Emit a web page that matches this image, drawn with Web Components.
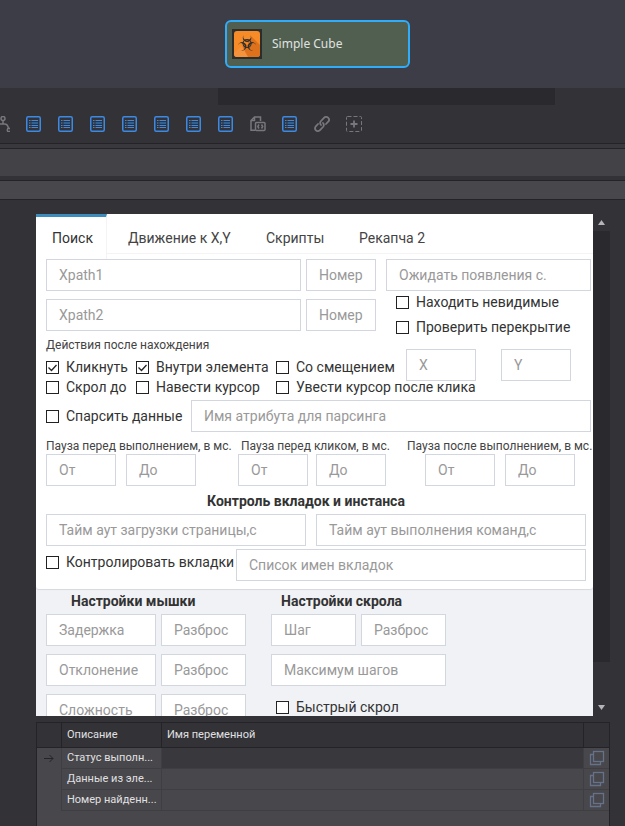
<!DOCTYPE html>
<html lang="ru">
<head>
<meta charset="utf-8">
<meta name="viewport" content="width=device-width, initial-scale=1">
<title>Simple Cube</title>
<style>
  html, body {
    height: 100%;
    margin: 0;
  }
  body {
    display: flex;
    flex-direction: column;
    overflow: hidden;
    background: #333236;
    color: #333;
    font: 14px/20px Roboto, "Noto Sans", sans-serif;
  }
</style>
</head>
<body>
  <project-canvas><cube-node>Simple Cube</cube-node></project-canvas>
  <tool-bar></tool-bar>
  <cube-settings></cube-settings>
  <variable-table></variable-table>

<script type="module">
  class ProjectCanvas extends HTMLElement {
    constructor() {
      super();
      this.attachShadow({mode: "open"});
      this.shadowRoot.innerHTML = `
      <style>
        :host {
          display: block;
          flex: none;
        }
        .area {
          display: flex;
          justify-content: center;
          padding: 20px 0 20px 10px;
          background: #3d3d47;
        }
        .track {
          height: 17px;
          margin: 0 70px 0 218px;
          background: #2a292e;
        }
      </style>
      <div class="area"><slot></slot></div>
      <div class="track"></div>
      `;
    }
  }

  class CubeNode extends HTMLElement {
    constructor() {
      super();
      this.attachShadow({mode: "open"});
      const horn = "M8.500 2.500A4.900 4.900 0 1 0 15.500 2.500A4.200 4.200 0 1 1 8.500 2.500z";
      this.shadowRoot.innerHTML = `
      <style>
        :host {
          display: flex;
          align-items: center;
          gap: 10px;
          box-sizing: border-box;
          width: 185px;
          height: 48px;
          padding-left: 5px;
          border: 2px solid #2fadfb;
          border-radius: 6px;
          background: #505f50;
          color: #e0e2e0;
          font-family: "Noto Sans", sans-serif;
          font-size: 12px;
        }
      </style>
      <svg width="30" height="30" viewBox="0 0 30 30" aria-hidden="true">
        <rect width="30" height="30" fill="#2d2e2c"/>
        <rect x="2" y="2" width="26" height="26" rx="3" fill="#f78b28"/>
        <path d="M20 8l8 8v9a3 3 0 0 1-3 3H11l-3-8z" fill="#dd711c"/>
        <path d="M2 24l8-7 6 11H5a3 3 0 0 1-3-3z" fill="#f5933c"/>
        <g transform="translate(4.500 3.500) scale(.880)" fill="#2e302e">
          <path d="${horn}"/>
          <path d="${horn}" transform="rotate(120 12 12.500)"/>
          <path d="${horn}" transform="rotate(240 12 12.500)"/>
          <circle cx="12" cy="12.500" r="4.600" fill="none" stroke="#2e302e" stroke-width="1.200"/>
          <circle cx="12" cy="12.500" r="1.300" fill="#f78b28"/>
        </g>
      </svg>
      <slot></slot>
      `;
    }
  }

  const toolIcons = {
    branch: `<g stroke="#77777d" stroke-width="1.500"><circle cx="9" cy="2.500" r="2"/><path d="M9 4.500v3.500M2 13c0-3 1-5 3.500-5h5c2.500 0 3.500 1 4 4.500"/><circle cx="15" cy="14" r="1.700"/></g>`,
    list: `<rect x=".750" y=".750" width="13.500" height="14.500" rx="1.500" stroke="#3b8ae6" stroke-width="1.500"/><path d="M3 4.500h1.500M3 7h1.500M3 9.500h1.500M3 11.500h1.500M5.500 4.500h6.500M5.500 7h6.500M5.500 9.500h6.500M5.500 11.500h6.500" stroke="#3b8ae6"/>`,
    code: `<g stroke="#77777d" stroke-width="1.500"><path d="M5 14.200H1V4.500L4.500 1h6v4M4.500 1v3.500H1"/><rect x="5.500" y="6.500" width="9.500" height="8" rx="1"/><path d="M9 8.500L7.800 10.500 9 12.500M11.500 8.500l1.200 2-1.200 2"/></g>`,
    link: `<g stroke="#77777d" stroke-width="1.800" stroke-linecap="round"><path d="M7 9a3 3 0 0 1 0-4l3-3.200a2.700 2.700 0 0 1 4.200 3.900L12 8"/><path d="M9 7a3 3 0 0 1 0 4l-3 3.200a2.700 2.700 0 0 1-4.200-3.900L4 8"/></g>`,
    add: `<rect x=".500" y=".500" width="15" height="15" rx="1" stroke="#77777d" stroke-dasharray="4 2"/><path d="M8 4.500v7M4.500 8h7" stroke="#77777d" stroke-width="1.800"/>`
  };

  class ToolBar extends HTMLElement {
    constructor() {
      super();
      this.attachShadow({mode: "open"});
      const names = ["branch", "list", "list", "list", "list", "list", "list", "list", "code", "list", "link", "add"];
      this.shadowRoot.innerHTML = `
      <style>
        :host {
          display: block;
          flex: none;
        }
        .tools {
          display: flex;
          height: 38px;
          margin-left: -14px;
        }
        button {
          display: grid;
          place-items: center;
          width: 32px;
          padding: 0;
          border: 0;
          background: none;
        }
        .line {
          height: 4px;
          border: solid #242328;
          border-width: 1px 0;
          background: #39383d;
        }
        .title {
          height: 27px;
          background: #434246;
        }
        .subtitle {
          height: 18px;
          margin: 4px 0 14px;
          border: solid #242328;
          border-width: 1px 0;
          background: #48474b;
        }
      </style>
      <div class="tools">
        ${names.map(name => `<button type="button" aria-label="${name}"><svg width="16" height="16" viewBox="0 0 16 16" fill="none">${toolIcons[name]}</svg></button>`).join("")}
      </div>
      <div class="line"></div>
      <div class="title"></div>
      <div class="subtitle"></div>
      `;
    }
  }

  class TextField extends HTMLElement {
    constructor() {
      super();
      this.attachShadow({mode: "open"});
      this.shadowRoot.innerHTML = `
      <style>
        :host {
          display: block;
          min-width: 0;
        }
        input {
          display: block;
          box-sizing: border-box;
          width: 100%;
          height: 32px;
          padding: 0 4px 0 12px;
          border: 1px solid #d2d6de;
          border-radius: 0;
          background: #fff;
          color: #333;
          font: inherit;
        }
        input::placeholder {
          color: #999;
          opacity: 1;
        }
      </style>
      <input type="text">
      `;
    }

    connectedCallback() {
      const input = this.shadowRoot.querySelector("input");
      input.placeholder = this.getAttribute("hint");
      input.setAttribute("aria-label", this.getAttribute("hint"));
    }
  }

  class CheckField extends HTMLElement {
    constructor() {
      super();
      this.attachShadow({mode: "open"});
      this.shadowRoot.innerHTML = `
      <style>
        :host {
          display: block;
          white-space: nowrap;
        }
        label {
          display: flex;
          align-items: center;
          gap: 7px;
        }
        .box {
          display: grid;
        }
        input, svg {
          grid-area: 1 / 1;
          box-sizing: border-box;
          width: 13px;
          height: 13px;
          margin: 0;
        }
        input {
          appearance: none;
          border: 1px solid #222;
          background: #fff;
        }
        svg {
          visibility: hidden;
          pointer-events: none;
        }
        input:checked + svg {
          visibility: visible;
        }
      </style>
      <label>
        <span class="box">
          <input type="checkbox">
          <svg viewBox="0 0 13 13" fill="none" stroke="#222" stroke-width="1.300"><path d="M2.500 6.500l3 3 5-5.500"/></svg>
        </span>
        <slot></slot>
      </label>
      `;
    }

    connectedCallback() {
      this.shadowRoot.querySelector("input").checked = this.hasAttribute("checked");
    }
  }

  class TabStrip extends HTMLElement {
    constructor() {
      super();
      this.attachShadow({mode: "open"});
      this.shadowRoot.innerHTML = `
      <style>
        :host {
          display: block;
        }
        div {
          display: grid;
          grid-template-columns: 71px 133px 88px 97px;
          gap: 5px;
          height: 39px;
          border-bottom: 1px solid #f4f4f4;
        }
        button {
          padding: 3px 0 0 16px;
          border: 0;
          background: none;
          color: #444;
          font: inherit;
          text-align: left;
          white-space: nowrap;
        }
        button[aria-selected="true"] {
          height: 45px;
          padding: 0 0 0 16px;
          border-top: 3px solid #3c8dbc;
          border-right: 1px solid #f4f4f4;
          background: #fff;
          color: #333;
        }
      </style>
      <div role="tablist"></div>
      `;
    }

    connectedCallback() {
      const list = this.shadowRoot.querySelector("div");
      this.getAttribute("tabs").split("|").forEach((name, i) => {
        const tab = document.createElement("button");
        tab.type = "button";
        tab.setAttribute("role", "tab");
        tab.setAttribute("aria-selected", i === 0);
        tab.textContent = name;
        list.append(tab);
      });
    }
  }

  class ScrollTrack extends HTMLElement {
    constructor() {
      super();
      this.attachShadow({mode: "open"});
      this.shadowRoot.innerHTML = `
      <style>
        :host {
          display: flex;
          flex-direction: column;
          width: 17px;
        }
        svg {
          flex: none;
        }
        .thumb {
          flex: 432;
          background: #2a292e;
        }
        .rest {
          flex: 37;
        }
      </style>
      <svg width="17" height="17"><path d="M5 11h7L8.500 6z" fill="#b5b5b8"/></svg>
      <div class="thumb"></div>
      <div class="rest"></div>
      <svg width="17" height="17"><path d="M5 6h7l-3.500 5z" fill="#b5b5b8"/></svg>
      `;
    }
  }

  class CubeSettings extends HTMLElement {
    constructor() {
      super();
      this.attachShadow({mode: "open"});
      this.shadowRoot.innerHTML = `
      <style>
        :host {
          display: flex;
          flex: 1;
          min-height: 0;
          margin: 0 15px 6px 36px;
        }
        form {
          flex: 1;
          min-width: 0;
          overflow: hidden;
          background: #f1f2f6;
        }
        h2, p {
          margin: 0;
          white-space: nowrap;
        }
        h2 {
          font-size: 14px;
          line-height: 20px;
        }
        p {
          color: #444;
          font-size: 12px;
          line-height: 16px;
        }
        .card {
          padding-bottom: 8px;
          border-radius: 0 0 3px 3px;
          background: #fff;
          box-shadow: 0 1px 1px #d8d9df;
        }
        .body {
          padding: 5px 2px 0 10px;
        }
        .find {
          display: grid;
          grid-template-columns: 1fr 205px;
          gap: 10px;
          height: 72px;
        }
        .paths {
          display: grid;
          grid-template-columns: 1fr 70px;
          align-content: start;
          gap: 8px 5px;
        }
        .flags {
          display: grid;
          gap: 5px;
          padding: 1px 0 0 10px;
        }
        .after {
          display: grid;
          grid-template-columns: 335px 70px 70px;
          column-gap: 25px;
          height: 63px;
          padding-top: 6px;
        }
        .actions {
          display: grid;
          grid-template-columns: 90px 140px 1fr;
          grid-template-rows: 20px 20px 20px;
          align-content: start;
        }
        .actions p {
          grid-column: 1 / -1;
        }
        .offset {
          padding-top: 12px;
        }
        .parse {
          display: grid;
          grid-template-columns: 145px 1fr;
          align-items: center;
        }
        .pauses {
          display: grid;
          grid-template-columns: 192px 169px 1fr;
          padding-top: 6px;
        }
        .pair {
          display: grid;
          grid-template-columns: 70px 70px;
          gap: 10px;
        }
        .near {
          gap: 8px;
        }
        .near-label {
          padding-left: 3px;
        }
        .indent {
          padding-left: 18px;
        }
        .tabs {
          padding: 5px 5px 0 0;
        }
        .tabs h2 {
          text-align: center;
          padding: 0 20px 3px 0;
        }
        .timeouts {
          display: grid;
          grid-template-columns: 26fr 27fr;
          gap: 10px;
        }
        .names {
          display: grid;
          grid-template-columns: 190px 1fr;
          padding-top: 3px;
        }
        .names check-field {
          padding-top: 3px;
        }
        .lower {
          display: grid;
          grid-template-columns: 200px 175px;
          gap: 25px;
          padding: 2px 10px 0;
        }
        .mouse, .scroll {
          display: grid;
          align-content: start;
          gap: 8px 5px;
        }
        .mouse {
          grid-template-columns: 110px 85px;
        }
        .scroll {
          grid-template-columns: 85px 85px;
        }
        .lower h2 {
          grid-column: 1 / -1;
          margin-bottom: -5px;
          padding-left: 25px;
        }
        .scroll h2 {
          padding-left: 10px;
        }
        .wide {
          grid-column: 1 / -1;
        }
        .fast {
          grid-column: 1 / -1;
          padding: 3px 0 0 5px;
        }
      </style>
      <form>
        <div class="card">
          <tab-strip tabs="Поиск|Движение к X,Y|Скрипты|Рекапча 2"></tab-strip>
          <div class="body">
            <div class="find">
              <div class="paths">
                <text-field hint="Xpath1"></text-field>
                <text-field hint="Номер"></text-field>
                <text-field hint="Xpath2"></text-field>
                <text-field hint="Номер"></text-field>
              </div>
              <div>
                <text-field hint="Ожидать появления с."></text-field>
                <div class="flags">
                  <check-field>Находить невидимые</check-field>
                  <check-field>Проверить перекрытие</check-field>
                </div>
              </div>
            </div>
            <div class="after">
              <div class="actions">
                <p>Действия после нахождения</p>
                <check-field checked>Кликнуть</check-field>
                <check-field checked>Внутри элемента</check-field>
                <check-field>Со смещением</check-field>
                <check-field>Скрол до</check-field>
                <check-field>Навести курсор</check-field>
                <check-field>Увести курсор после клика</check-field>
              </div>
              <text-field class="offset" hint="X"></text-field>
              <text-field class="offset" hint="Y"></text-field>
            </div>
            <div class="parse">
              <check-field>Спарсить данные</check-field>
              <text-field hint="Имя атрибута для парсинга"></text-field>
            </div>
            <div class="pauses">
              <div>
                <p>Пауза перед выполнением, в мс.</p>
                <div class="pair">
                  <text-field hint="От"></text-field>
                  <text-field hint="До"></text-field>
                </div>
              </div>
              <div>
                <p class="near-label">Пауза перед кликом, в мс.</p>
                <div class="pair near">
                  <text-field hint="От"></text-field>
                  <text-field hint="До"></text-field>
                </div>
              </div>
              <div>
                <p>Пауза после выполнением, в мс.</p>
                <div class="pair indent">
                  <text-field hint="От"></text-field>
                  <text-field hint="До"></text-field>
                </div>
              </div>
            </div>
            <div class="tabs">
              <h2>Контроль вкладок и инстанса</h2>
              <div class="timeouts">
                <text-field hint="Тайм аут загрузки страницы,с"></text-field>
                <text-field hint="Тайм аут выполнения команд,с"></text-field>
              </div>
              <div class="names">
                <check-field>Контролировать вкладки</check-field>
                <text-field hint="Список имен вкладок"></text-field>
              </div>
            </div>
          </div>
        </div>
        <div class="lower">
          <div class="mouse">
            <h2>Настройки мышки</h2>
            <text-field hint="Задержка"></text-field>
            <text-field hint="Разброс"></text-field>
            <text-field hint="Отклонение"></text-field>
            <text-field hint="Разброс"></text-field>
            <text-field hint="Сложность"></text-field>
            <text-field hint="Разброс"></text-field>
          </div>
          <div class="scroll">
            <h2>Настройки скрола</h2>
            <text-field hint="Шаг"></text-field>
            <text-field hint="Разброс"></text-field>
            <text-field class="wide" hint="Максимум шагов"></text-field>
            <check-field class="fast">Быстрый скрол</check-field>
          </div>
        </div>
      </form>
      <scroll-track></scroll-track>
      `;
    }
  }

  class VariableTable extends HTMLElement {
    constructor() {
      super();
      this.attachShadow({mode: "open"});
      const rows = ["Статус выполн...", "Данные из эле...", "Номер найденн..."];
      this.shadowRoot.innerHTML = `
      <style>
        :host {
          display: block;
          flex: none;
          box-sizing: border-box;
          height: 104px;
          margin: 0 15px 0 36px;
          border: solid #242328;
          border-width: 1px 1px 0;
          background: #48474b;
          color: #e0e0e2;
          font-size: 11px;
          line-height: 20px;
        }
        table {
          width: 100%;
          table-layout: fixed;
          border-collapse: separate;
          border-spacing: 0;
        }
        .mark {
          width: 25px;
        }
        .about {
          width: 100px;
        }
        .copy {
          width: 25px;
        }
        th, td {
          box-sizing: border-box;
          padding: 0 0 0 5px;
          text-align: left;
          font-weight: normal;
          white-space: nowrap;
        }
        th {
          height: 25px;
          border: solid #242328;
          border-width: 0 1px 1px 0;
          background: #333236;
        }
        th:last-child, td:last-child {
          border-right: 0;
        }
        td {
          height: 21px;
          border: solid #3f3e43;
          border-width: 0 1px 1px 0;
        }
        td:first-child {
          border-bottom: 0;
        }
        tr.current td:nth-child(3) {
          background: #39383d;
        }
        svg {
          display: block;
        }
        button {
          display: block;
          padding: 0;
          border: 0;
          background: none;
        }
      </style>
      <table>
        <thead>
          <tr><th class="mark"></th><th class="about">Описание</th><th>Имя переменной</th><th class="copy"></th></tr>
        </thead>
        <tbody>
          ${rows.map((row, i) => `
          <tr class="${i === 0 ? "current" : ""}">
            <td>${i === 0 ? `<svg width="14" height="12" viewBox="0 0 14 12" fill="none" stroke="#242328"><path d="M2 5.500h9M7.500 2l3.500 3.500L7.500 9"/></svg>` : ""}</td>
            <td>${row}</td>
            <td></td>
            <td><button type="button" aria-label="copy"><svg width="16" height="16" viewBox="0 0 16 16" fill="none" stroke="#66728a" stroke-width="1.300"><path d="M4.500 4.500h-3v10h10v-3"/><rect x="4.500" y="1.500" width="10" height="10"/></svg></button></td>
          </tr>`).join("")}
        </tbody>
      </table>
      `;
    }
  }

  customElements.define("text-field", TextField);
  customElements.define("check-field", CheckField);
  customElements.define("tab-strip", TabStrip);
  customElements.define("scroll-track", ScrollTrack);
  customElements.define("project-canvas", ProjectCanvas);
  customElements.define("cube-node", CubeNode);
  customElements.define("tool-bar", ToolBar);
  customElements.define("cube-settings", CubeSettings);
  customElements.define("variable-table", VariableTable);
</script>
</body>
</html>
